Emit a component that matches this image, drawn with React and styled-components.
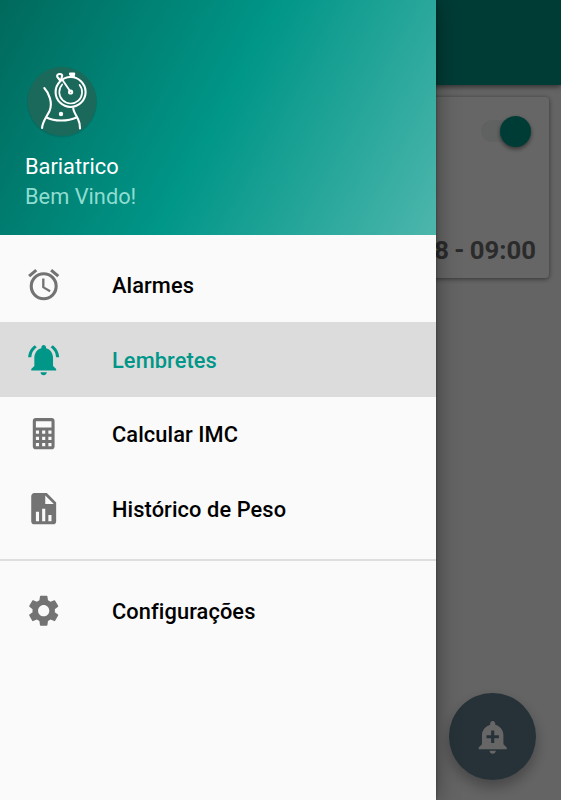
import React from 'react'
import styled, { createGlobalStyle } from 'styled-components'
import { MdAddAlert, MdNotificationsActive, MdSettings } from 'react-icons/md'

const GlobalStyle = createGlobalStyle`
  * { box-sizing: border-box; }

  body {
    margin: 0;
    overflow: hidden;
    font-family: Roboto, sans-serif;
  }
`;

const Screen = styled.div`
  position: relative;
  width: 561px;
  height: 800px;
  overflow: hidden;
  background: #fafafa;
`;

// reminders page, sits behind the drawer

const Toolbar = styled.header`
  position: relative;
  height: 85px;
  background: #009688;
  box-shadow: 0 2px 5px rgba(0, 0, 0, 0.5);
`;

const Card = styled.section`
  display: flex;
  flex-direction: column;
  justify-content: space-between;
  align-items: flex-end;
  height: 181px;
  margin: 12px 12px 0;
  padding: 18px 13px 12px;
  border-radius: 4px;
  background: #fff;
  box-shadow: 0 1px 5px rgba(0, 0, 0, 0.5);
`;

const Switch = styled.div`
  display: flex;
  align-items: center;
  justify-content: flex-end;
  width: 50px;
  height: 22px;
  margin: 5px 5px 0 0;
  border-radius: 11px;
  background: #f0f6f5;
`;

const Thumb = styled.span`
  width: 31px;
  height: 31px;
  border-radius: 50%;
  background: #009688;
  box-shadow: 0 2px 4px rgba(0, 0, 0, 0.5);
`;

const CardTime = styled.div`
  font-size: 25.7px;
  line-height: 32px;
  font-weight: 700;
  word-spacing: -1px;
  color: #6d6d6d;
`;

const Fab = styled.button`
  position: absolute;
  right: 25px;
  bottom: 20px;
  display: flex;
  align-items: center;
  justify-content: center;
  width: 87px;
  height: 87px;
  padding: 0;
  border: 0;
  border-radius: 50%;
  background: #607d8b;
  color: #fff;
  box-shadow: 0 7px 14px rgba(0, 0, 0, 0.3);
`;

const Scrim = styled.div`
  position: absolute;
  inset: 0;
  background: rgba(0, 0, 0, 0.6);
`;

// drawer

const Drawer = styled.aside`
  position: absolute;
  top: 0;
  bottom: 0;
  left: 0;
  width: 436px;
  background: #fafafa;
  box-shadow: 0 0 22px rgba(0, 0, 0, 0.4), 0 0 3px rgba(0, 0, 0, 0.35);
`;

const DrawerHeader = styled.div`
  display: flex;
  flex-direction: column;
  height: 235px;
  padding: 64px 25px 0;
  background: linear-gradient(118.3deg, #00695c 0%, #009688 50%, #4db6ac 100%);
`;

const Name = styled.div`
  margin-top: 12px;
  font-size: 21.8px;
  line-height: 30px;
  color: #fff;
`;

const Welcome = styled.div`
  font-size: 21.8px;
  line-height: 30px;
  color: #8fdcd0;
`;

const Menu = styled.nav`
  display: flex;
  flex-direction: column;
  padding: 12px 0;
`;

const Item = styled.a`
  display: flex;
  align-items: center;
  gap: 49.6px;
  height: 74.8px;
  padding-left: 25px;
  font-size: 21.8px;
  font-weight: 500;
  color: ${props => props.$active ? '#009688' : '#000'};
  background: ${props => props.$active ? '#dcdcdc' : 'transparent'};

  svg {
    color: ${props => props.$active ? '#009688' : '#737373'};
  }
`;

const Label = styled.span`
  padding-top: 2px;
  letter-spacing: 0.1px;
`;

const Divider = styled.hr`
  width: 100%;
  height: 2px;
  margin: 13px 0 12px;
  border: 0;
  background: #dedede;
`;

const Icon = ({ d, size = 37.4 }) => (
  <svg width={size} height={size} viewBox="0 0 24 24" fill="currentColor" fillRule="evenodd">
    <path d={d} />
  </svg>
);

const alarm = 'M12 20a7 7 0 1 1 0-14 7 7 0 0 1 0 14m0-16a9 9 0 1 0 0 18 9 9 0 0 0 0-18m.5 4H11v6l4.75 2.85.75-1.23-4-2.37V8M7.88 3.39 6.6 1.86 2 5.71l1.29 1.53 4.59-3.85M22 5.72l-4.6-3.86-1.29 1.53 4.6 3.86L22 5.72';
const calculator = 'M7 2h10a2 2 0 0 1 2 2v16a2 2 0 0 1-2 2H7a2 2 0 0 1-2-2V4a2 2 0 0 1 2-2m0 2v4h10V4H7m0 6v2h2v-2H7m4 0v2h2v-2h-2m4 0v2h2v-2h-2m-8 4v2h2v-2H7m4 0v2h2v-2h-2m4 0v2h2v-2h-2m-8 4v2h2v-2H7m4 0v2h2v-2h-2m4 0v2h2v-2h-2z';
const fileChart = 'M13 9h5.5L13 3.5V9M6 2h8l6 6v12a2 2 0 0 1-2 2H6a2 2 0 0 1-2-2V4c0-1.11.89-2 2-2m1 18h2v-6H7v6m4 0h2v-8h-2v8m4 0h2v-4h-2v4z';

const LogoBox = styled.div`
  height: 76px;
  line-height: 0;
`;

const Logo = () => (
  <svg width="74" height="76" viewBox="0 0 74 76" fill="none" stroke="#fff" strokeWidth="2.1" strokeLinecap="round">
    <circle cx="37" cy="38.5" r="35" fill="#0a5a50" fillOpacity=".35" stroke="none" />
    <circle cx="37" cy="37.3" r="34.5" fill="#1b695b" stroke="none" />
    {/* waist */}
    <path d="M19.3 24C24 29 28 39 24.5 47C21 54 17.3 58 17.1 64" />
    <path d="M48.3 44.5C48.3 47 51 51 53 55C54.5 58 55 61 55 64.5" />
    <path d="M21.5 53.5C29 57.5 43 57.5 51.5 53.5" />
    <circle cx="36" cy="50" r="2.2" fill="#fff" stroke="none" />
    {/* stopwatch */}
    <circle cx="45.6" cy="28" r="15" />
    <path d="M37.2 20.5A11.4 11.4 0 1 0 54.6 21" strokeWidth="1.7" />
    <path d="M37.5 16L45 27" strokeWidth="1.9" />
    <circle cx="45.6" cy="28" r="1.6" strokeWidth="2" />
    <path d="M34.8 16L32.3 13C31 9.6 37 9 37.2 11.6L36.2 15.5" />
    <path d="M45.2 9.9H49M45.8 12H48.8" strokeWidth="2.6" />
  </svg>
);

const items = [
  { label: 'Alarmes', icon: <Icon d={alarm} /> },
  { label: 'Lembretes', icon: <MdNotificationsActive size={37.4} />, active: true },
  { label: 'Calcular IMC', icon: <Icon d={calculator} /> },
  { label: 'Histórico de Peso', icon: <Icon d={fileChart} /> },
];

const App = () => {
  return (
    <Screen>
      <GlobalStyle />

      <Toolbar />
      <Card>
        <Switch><Thumb /></Switch>
        <CardTime>8 - 09:00</CardTime>
      </Card>
      <Fab>
        <MdAddAlert size={37.4} />
      </Fab>

      <Scrim />

      <Drawer>
        <DrawerHeader>
          <LogoBox><Logo /></LogoBox>
          <Name>Bariatrico</Name>
          <Welcome>Bem Vindo!</Welcome>
        </DrawerHeader>

        <Menu>
          {items.map(item => (
            <Item key={item.label} $active={item.active}>
              {item.icon}
              <Label>{item.label}</Label>
            </Item>
          ))}
          <Divider />
          <Item>
            <MdSettings size={37.4} />
            <Label>Configurações</Label>
          </Item>
        </Menu>
      </Drawer>
    </Screen>
  );
};

export default App;
